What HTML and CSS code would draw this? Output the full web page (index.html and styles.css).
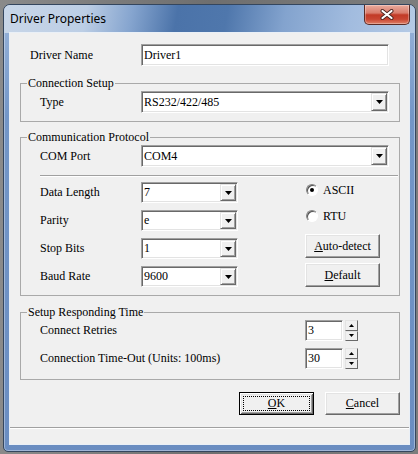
FILE: index.html
```html
<!DOCTYPE html>
<html>
<head>
<meta charset="utf-8">
<title>Driver Properties</title>
<link rel="stylesheet" href="styles.css">
</head>
<body>
<div class="window">
  <div class="titlebar">
    <span class="title">Driver Properties</span>
    <span class="close">
      <svg width="14" height="11" viewBox="0 0 14 11"><path d="M2.5 2 L11.5 9 M11.5 2 L2.5 9" stroke="#4a2420" stroke-width="4" stroke-linecap="round"/><path d="M2.5 2 L11.5 9 M11.5 2 L2.5 9" stroke="#ffffff" stroke-width="2.2" stroke-linecap="round"/></svg>
    </span>
  </div>
  <div class="frame">
    <div class="client">
      <div class="row name-row">
        <span class="label">Driver Name</span>
        <span class="edit"><span class="val">Driver1</span></span>
      </div>

      <fieldset class="group g1">
        <legend>Connection Setup</legend>
        <div class="row wide-row">
          <span class="label">Type</span>
          <span class="combo wide"><span class="val">RS232/422/485</span><span class="drop"><svg width="7" height="4" viewBox="0 0 7 4"><polygon points="0,0 7,0 3.5,4" fill="#000"/></svg></span></span>
        </div>
      </fieldset>

      <fieldset class="group g2">
        <legend>Communication Protocol</legend>
        <div class="row wide-row">
          <span class="label">COM Port</span>
          <span class="combo wide"><span class="val">COM4</span><span class="drop"><svg width="7" height="4" viewBox="0 0 7 4"><polygon points="0,0 7,0 3.5,4" fill="#000"/></svg></span></span>
        </div>
        <div class="sep"></div>
        <div class="serial">
          <div class="params">
            <div class="row small-row">
              <span class="label">Data Length</span>
              <span class="combo small"><span class="val">7</span><span class="drop"><svg width="7" height="4" viewBox="0 0 7 4"><polygon points="0,0 7,0 3.5,4" fill="#000"/></svg></span></span>
            </div>
            <div class="row small-row">
              <span class="label">Parity</span>
              <span class="combo small"><span class="val">e</span><span class="drop"><svg width="7" height="4" viewBox="0 0 7 4"><polygon points="0,0 7,0 3.5,4" fill="#000"/></svg></span></span>
            </div>
            <div class="row small-row">
              <span class="label">Stop Bits</span>
              <span class="combo small"><span class="val">1</span><span class="drop"><svg width="7" height="4" viewBox="0 0 7 4"><polygon points="0,0 7,0 3.5,4" fill="#000"/></svg></span></span>
            </div>
            <div class="row small-row">
              <span class="label">Baud Rate</span>
              <span class="combo small"><span class="val">9600</span><span class="drop"><svg width="7" height="4" viewBox="0 0 7 4"><polygon points="0,0 7,0 3.5,4" fill="#000"/></svg></span></span>
            </div>
          </div>
          <div class="side">
            <div class="radio-row"><span class="radio checked"></span><span>ASCII</span></div>
            <div class="radio-row"><span class="radio"></span><span>RTU</span></div>
            <span class="btn side-btn first"><u>A</u>uto-detect</span>
            <span class="btn side-btn"><u>D</u>efault</span>
          </div>
        </div>
      </fieldset>

      <fieldset class="group g3">
        <legend>Setup Responding Time</legend>
        <div class="row spin-row">
          <span class="label">Connect Retries</span>
          <span class="spinner">
            <span class="edit num"><span class="val">3</span></span>
            <span class="spin">
              <span class="spin-btn"><svg width="5" height="3" viewBox="0 0 5 3"><polygon points="2.5,0 5,3 0,3" fill="#000"/></svg></span>
              <span class="spin-btn"><svg width="5" height="3" viewBox="0 0 5 3"><polygon points="0,0 5,0 2.5,3" fill="#000"/></svg></span>
            </span>
          </span>
        </div>
        <div class="row spin-row">
          <span class="label">Connection Time-Out (Units: 100ms)</span>
          <span class="spinner">
            <span class="edit num"><span class="val">30</span></span>
            <span class="spin">
              <span class="spin-btn"><svg width="5" height="3" viewBox="0 0 5 3"><polygon points="2.5,0 5,3 0,3" fill="#000"/></svg></span>
              <span class="spin-btn"><svg width="5" height="3" viewBox="0 0 5 3"><polygon points="0,0 5,0 2.5,3" fill="#000"/></svg></span>
            </span>
          </span>
        </div>
      </fieldset>

      <div class="actions">
        <span class="btn default"><u>O</u>K</span>
        <span class="btn"><u>C</u>ancel</span>
      </div>

      <div class="status"></div>
    </div>
  </div>
</div>
</body>
</html>
```

FILE: styles.css
```css
* { box-sizing: border-box; }
html, body { margin: 0; padding: 0; }
body {
  width: 418px;
  height: 454px;
  overflow: hidden;
  background: linear-gradient(to right, #8a8a8a, #6f6f6f 50%, #7d7d7d);
  font-family: "Liberation Serif", "Tinos", "DejaVu Serif", serif;
  font-size: 12px;
  color: #000;
}
.window {
  margin: 4px 0 0 3px;
  width: 413px;
  height: 448px;
  border: 1px solid #34465e;
  border-radius: 7px 7px 5px 5px;
  background: linear-gradient(to bottom, #9ab5da 0%, #7396c7 25%, #6a8dc1 100%);
  box-shadow: inset 0 0 0 1px rgba(255,255,255,0.35);
  display: flex;
  flex-direction: column;
  overflow: hidden;
}
.titlebar {
  height: 28px;
  flex: none;
  display: flex;
  align-items: flex-start;
  justify-content: space-between;
  background: linear-gradient(100deg, #c8d6e8 0%, #bccee5 20%, #86a5cf 31%, #4b73a9 42%, #4f77ac 54%, #83a3ce 68%, #a2bcdf 84%, #b5cae5 100%);
}
.title {
  font-family: "Noto Sans", "Open Sans", sans-serif;
  font-size: 12px;
  line-height: 16px;
  margin: 6px 0 0 6px;
  color: #000;
}
.close {
  width: 46px;
  height: 20px;
  margin-right: 5px;
  border: 1px solid #5b2b25;
  border-top: none;
  border-radius: 0 0 5px 5px;
  background: linear-gradient(to bottom, #e9ab9d 0%, #d97c6c 42%, #c23a27 52%, #c94632 75%, #de8068 100%);
  box-shadow: inset 0 0 0 1px rgba(255,255,255,0.3);
  display: flex;
  align-items: center;
  justify-content: center;
}
.frame {
  flex: 1;
  padding: 0 6px 7px;
}
.client {
  width: 399px;
  height: 411px;
  background: #f0f0f0;
  box-shadow: 0 0 0 1px #eaf0f7;
  display: flex;
  flex-direction: column;
}
.row {
  display: grid;
  align-items: center;
}
.name-row {
  margin-top: 11px;
  padding-left: 20px;
  grid-template-columns: 111px 248px;
  height: 22px;
}
.group {
  margin: 0 0 0 10px;
  width: 380px;
  min-width: 0;
  padding: 1px 0 8px;
  border: 1px solid #a9a9a9;
}
legend {
  margin-left: 6px;
  padding: 0 1px;
  font-size: 12px;
  line-height: 14px;
}
.g1 { margin-top: 10px; }
.g2 { margin-top: 8px; }
.g3 { margin-top: 9px; padding-bottom: 10px; }
.group .row { padding-left: 19px; }
.wide-row {
  grid-template-columns: 101px 248px;
  height: 22px;
}
.edit, .combo {
  height: 22px;
  border: 1px solid;
  border-color: #a0a0a0 #ffffff #ffffff #a0a0a0;
  padding: 1px;
  box-shadow: inset 1px 1px 0 #696969, inset -1px -1px 0 #e3e3e3;
  background: #fff;
  display: flex;
  align-items: stretch;
}
.val {
  flex: 1;
  display: flex;
  align-items: center;
  padding-left: 1px;
  white-space: nowrap;
}
.drop {
  flex: none;
  width: 16px;
  background: #f0f0f0;
  border: 1px solid;
  border-color: #e3e3e3 #696969 #696969 #e3e3e3;
  box-shadow: inset 1px 1px 0 #fff, inset -1px -1px 0 #a0a0a0;
  display: flex;
  align-items: center;
  justify-content: center;
}
.sep {
  margin: 8px 0 0 19px;
  width: 358px;
  height: 2px;
  border-top: 1px solid #a0a0a0;
  border-bottom: 1px solid #fff;
}
.serial {
  display: flex;
  margin-top: 5px;
}
.params {
  display: flex;
  flex-direction: column;
  gap: 7px;
}
.small-row {
  grid-template-columns: 101px 97px;
  height: 21px;
}
.combo.small { height: 21px; }
.side {
  margin-left: 67px;
  width: 75px;
  display: flex;
  flex-direction: column;
}
.radio-row {
  display: flex;
  align-items: center;
  gap: 5px;
  height: 16px;
  padding-left: 1px;
}
.radio-row + .radio-row { margin-top: 10px; }
.radio {
  width: 12px;
  height: 12px;
  border-radius: 50%;
  border: 1px solid;
  border-color: #808080 #ffffff #ffffff #808080;
  background: #fff;
  box-shadow: inset 1px 1px 0 #505050;
  display: flex;
  align-items: center;
  justify-content: center;
}
.radio.checked::after {
  content: "";
  width: 4px;
  height: 4px;
  border-radius: 50%;
  background: #000;
}
.btn {
  display: flex;
  align-items: center;
  justify-content: center;
  background: #f0f0f0;
  border: 1px solid;
  border-color: #ffffff #696969 #696969 #ffffff;
  box-shadow: inset -1px -1px 0 #a0a0a0, inset 1px 1px 0 #e3e3e3;
  white-space: nowrap;
}
.side-btn { height: 24px; }
.side-btn.first { margin-top: 10px; }
.side-btn + .side-btn { margin-top: 5px; }
.spin-row {
  grid-template-columns: 265px auto;
  height: 21px;
}
.spin-row + .spin-row { margin-top: 7px; }
.spinner {
  display: flex;
  gap: 2px;
}
.edit.num {
  width: 38px;
  height: 21px;
}
.spin {
  width: 13px;
  height: 21px;
  display: flex;
  flex-direction: column;
}
.spin-btn {
  flex: 1;
  background: #f0f0f0;
  border: 1px solid;
  border-color: #e3e3e3 #696969 #696969 #e3e3e3;
  display: flex;
  align-items: center;
  justify-content: center;
}
.actions {
  display: flex;
  justify-content: flex-end;
  gap: 11px;
  margin-top: 12px;
  padding-right: 9px;
}
.actions .btn {
  width: 75px;
  height: 23px;
}
.btn.default {
  border: 1px solid #000;
  box-shadow: inset 1px 1px 0 #fff, inset -1px -1px 0 #696969, inset 2px 2px 0 #e3e3e3, inset -2px -2px 0 #a0a0a0;
  outline: 1px dotted #000;
  outline-offset: -5px;
}
.status {
  margin-top: auto;
  height: 17px;
  border-top: 1px solid #a0a0a0;
  box-shadow: inset 0 1px 0 #fff;
}
```
